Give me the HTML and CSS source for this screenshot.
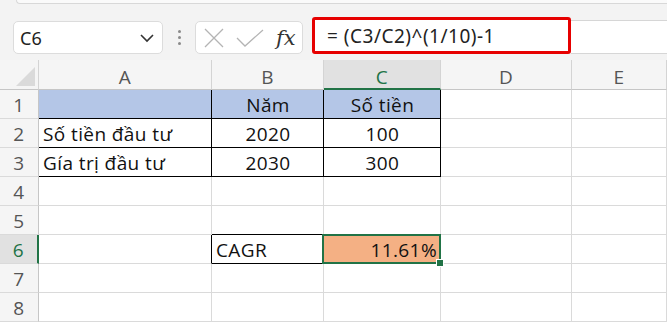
FILE: index.html
```html
<html>
<head>
  <link rel="stylesheet" href="styles.css">
</head>
<body>
  <div class="ribbon-edge"></div>
  <div class="formula-bar">
    <div class="name-box">
      <span>C6</span>
      <svg class="chevron" width="16" height="10" viewBox="0 0 16 10"><path d="M2 2 L8 8 L14 2" fill="none" stroke="#333" stroke-width="1.6"/></svg>
    </div>
    <div class="grip"><i></i><i></i><i></i></div>
    <div class="fx-box">
      <svg width="20" height="20" viewBox="0 0 20 20"><path d="M1 1 L19 19 M19 1 L1 19" stroke="#b4b4b4" stroke-width="1.3"/></svg>
      <svg width="28" height="20" viewBox="0 0 28 20"><path d="M1 10 L9 18 L27 2" fill="none" stroke="#b4b4b4" stroke-width="1.3"/></svg>
      <span class="fx">fx</span>
    </div>
    <div class="formula">= (C3/C2)^(1/10)-1</div>
    <div class="formula-rest"></div>
  </div>

  <div class="sheet">
    <div class="hd corner"><span class="tri"></span></div>
    <div class="hd">A</div>
    <div class="hd">B</div>
    <div class="hd sel-col">C</div>
    <div class="hd">D</div>
    <div class="hd">E</div>

    <div class="rh">1</div>
    <div class="c blue bk"></div>
    <div class="c blue bk center">Năm</div>
    <div class="c blue bk center">Số tiền</div>
    <div class="c"></div>
    <div class="c"></div>

    <div class="rh">2</div>
    <div class="c bk">Số tiền đầu tư</div>
    <div class="c bk center">2020</div>
    <div class="c bk center">100</div>
    <div class="c"></div>
    <div class="c"></div>

    <div class="rh">3</div>
    <div class="c bk">Gía trị đầu tư</div>
    <div class="c bk center">2030</div>
    <div class="c bk center">300</div>
    <div class="c"></div>
    <div class="c"></div>

    <div class="rh">4</div>
    <div class="c"></div>
    <div class="c"></div>
    <div class="c"></div>
    <div class="c"></div>
    <div class="c"></div>

    <div class="rh">5</div>
    <div class="c"></div>
    <div class="c bk-bottom"></div>
    <div class="c"></div>
    <div class="c"></div>
    <div class="c"></div>

    <div class="rh sel-row">6</div>
    <div class="c bk-right"></div>
    <div class="c bk">CAGR</div>
    <div class="c orange right active">11.61%</div>
    <div class="c"></div>
    <div class="c"></div>

    <div class="rh">7</div>
    <div class="c"></div>
    <div class="c"></div>
    <div class="c"></div>
    <div class="c"></div>
    <div class="c"></div>

    <div class="rh">8</div>
    <div class="c"></div>
    <div class="c"></div>
    <div class="c"></div>
    <div class="c"></div>
    <div class="c"></div>
  </div>
</body>
</html>
```

FILE: styles.css
```css
* {
  box-sizing: border-box;
}

body {
  margin: 0;
  background: #f3f3f3;
  font-family: "Noto Sans", sans-serif;
  overflow: hidden;
}

.ribbon-edge {
  height: 4px;
  margin-left: 16px;
  background: #fafafa;
  border-bottom: 1px solid #d8d8d8;
  border-left: 1px solid #d8d8d8;
  border-bottom-left-radius: 6px;
}

.formula-bar {
  height: 56px;
  display: flex;
  align-items: flex-end;
  padding: 0 0 6px 13px;
}

.name-box {
  width: 150px;
  height: 33px;
  background: #fff;
  border: 1px solid #dcdcdc;
  border-radius: 5px;
  display: flex;
  align-items: center;
  justify-content: space-between;
  padding: 0 7px 0 6px;
  font-size: 18px;
  color: #222;
}

.grip {
  width: 32px;
  height: 33px;
  display: flex;
  flex-direction: column;
  align-items: center;
  justify-content: center;
  gap: 3px;
}

.grip i {
  width: 3px;
  height: 3px;
  border-radius: 50%;
  background: #8a8a8a;
}

.fx-box {
  width: 108px;
  height: 33px;
  background: #fff;
  border: 1px solid #dcdcdc;
  border-radius: 5px;
  display: flex;
  align-items: center;
  gap: 12px;
  padding-left: 8px;
}

.fx {
  font-family: "DejaVu Serif", serif;
  font-style: italic;
  font-size: 21px;
  color: #333;
}

.formula {
  width: 259px;
  height: 37px;
  margin-left: 9px;
  background: #fff;
  border: 3px solid #e60000;
  border-radius: 3px;
  padding-left: 12px;
  font-size: 19px;
  letter-spacing: 0.5px;
  color: #222;
  display: flex;
  align-items: center;
}

.formula-rest {
  flex: 1;
  height: 34px;
  background: #fff;
  border-top: 1px solid #d6d6d6;
  border-bottom: 1px solid #d6d6d6;
}

.sheet {
  display: grid;
  grid-template-columns: 39px 173px 112px 117px 131px 1fr;
  grid-template-rows: 30px;
  grid-auto-rows: 29px;
  background: #fff;
  font-family: "Open Sans", sans-serif;
  font-size: 19px;
  line-height: 18px;
  letter-spacing: 0.4px;
  color: #111;
}

.hd {
  background: #f5f5f5;
  border-right: 1px solid #d4d4d4;
  border-bottom: 1px solid #c6c6c6;
  color: #555;
  display: flex;
  align-items: flex-end;
  justify-content: center;
  padding-bottom: 3px;
}

.corner {
  position: relative;
}

.tri {
  position: absolute;
  right: 3px;
  bottom: 3px;
  width: 19px;
  height: 19px;
  background: #dadada;
  clip-path: polygon(100% 0, 100% 100%, 0 100%);
}

.sel-col {
  background: #e1e1e1;
  color: #217346;
  border-bottom: 2px solid #217346;
  padding-bottom: 2px;
}

.rh {
  background: #f5f5f5;
  border-right: 1px solid #c6c6c6;
  border-bottom: 1px solid #dadada;
  color: #555;
  display: flex;
  align-items: flex-end;
  justify-content: center;
  padding-bottom: 4px;
}

.sel-row {
  background: #e1e1e1;
  color: #217346;
  border-right: 2px solid #217346;
}

.c {
  border-right: 1px solid #dadada;
  border-bottom: 1px solid #dadada;
  display: flex;
  align-items: flex-end;
  padding: 0 3px 4px 4px;
  white-space: nowrap;
}

.center {
  justify-content: center;
}

.right {
  justify-content: flex-end;
}

.blue {
  background: #b4c6e7;
}

.orange {
  background: #f4b084;
}

.bk {
  border-right-color: #000;
  border-bottom-color: #000;
}

.bk-bottom {
  border-bottom-color: #000;
}

.bk-right {
  border-right-color: #000;
}

.active {
  position: relative;
}

.active::before {
  content: "";
  position: absolute;
  left: -2px;
  top: -1px;
  right: -1px;
  bottom: -1px;
  border: 2px solid #217346;
}

.active::after {
  content: "";
  position: absolute;
  right: -4px;
  bottom: -4px;
  width: 6px;
  height: 6px;
  background: #217346;
  border: 1px solid #fff;
}
```
